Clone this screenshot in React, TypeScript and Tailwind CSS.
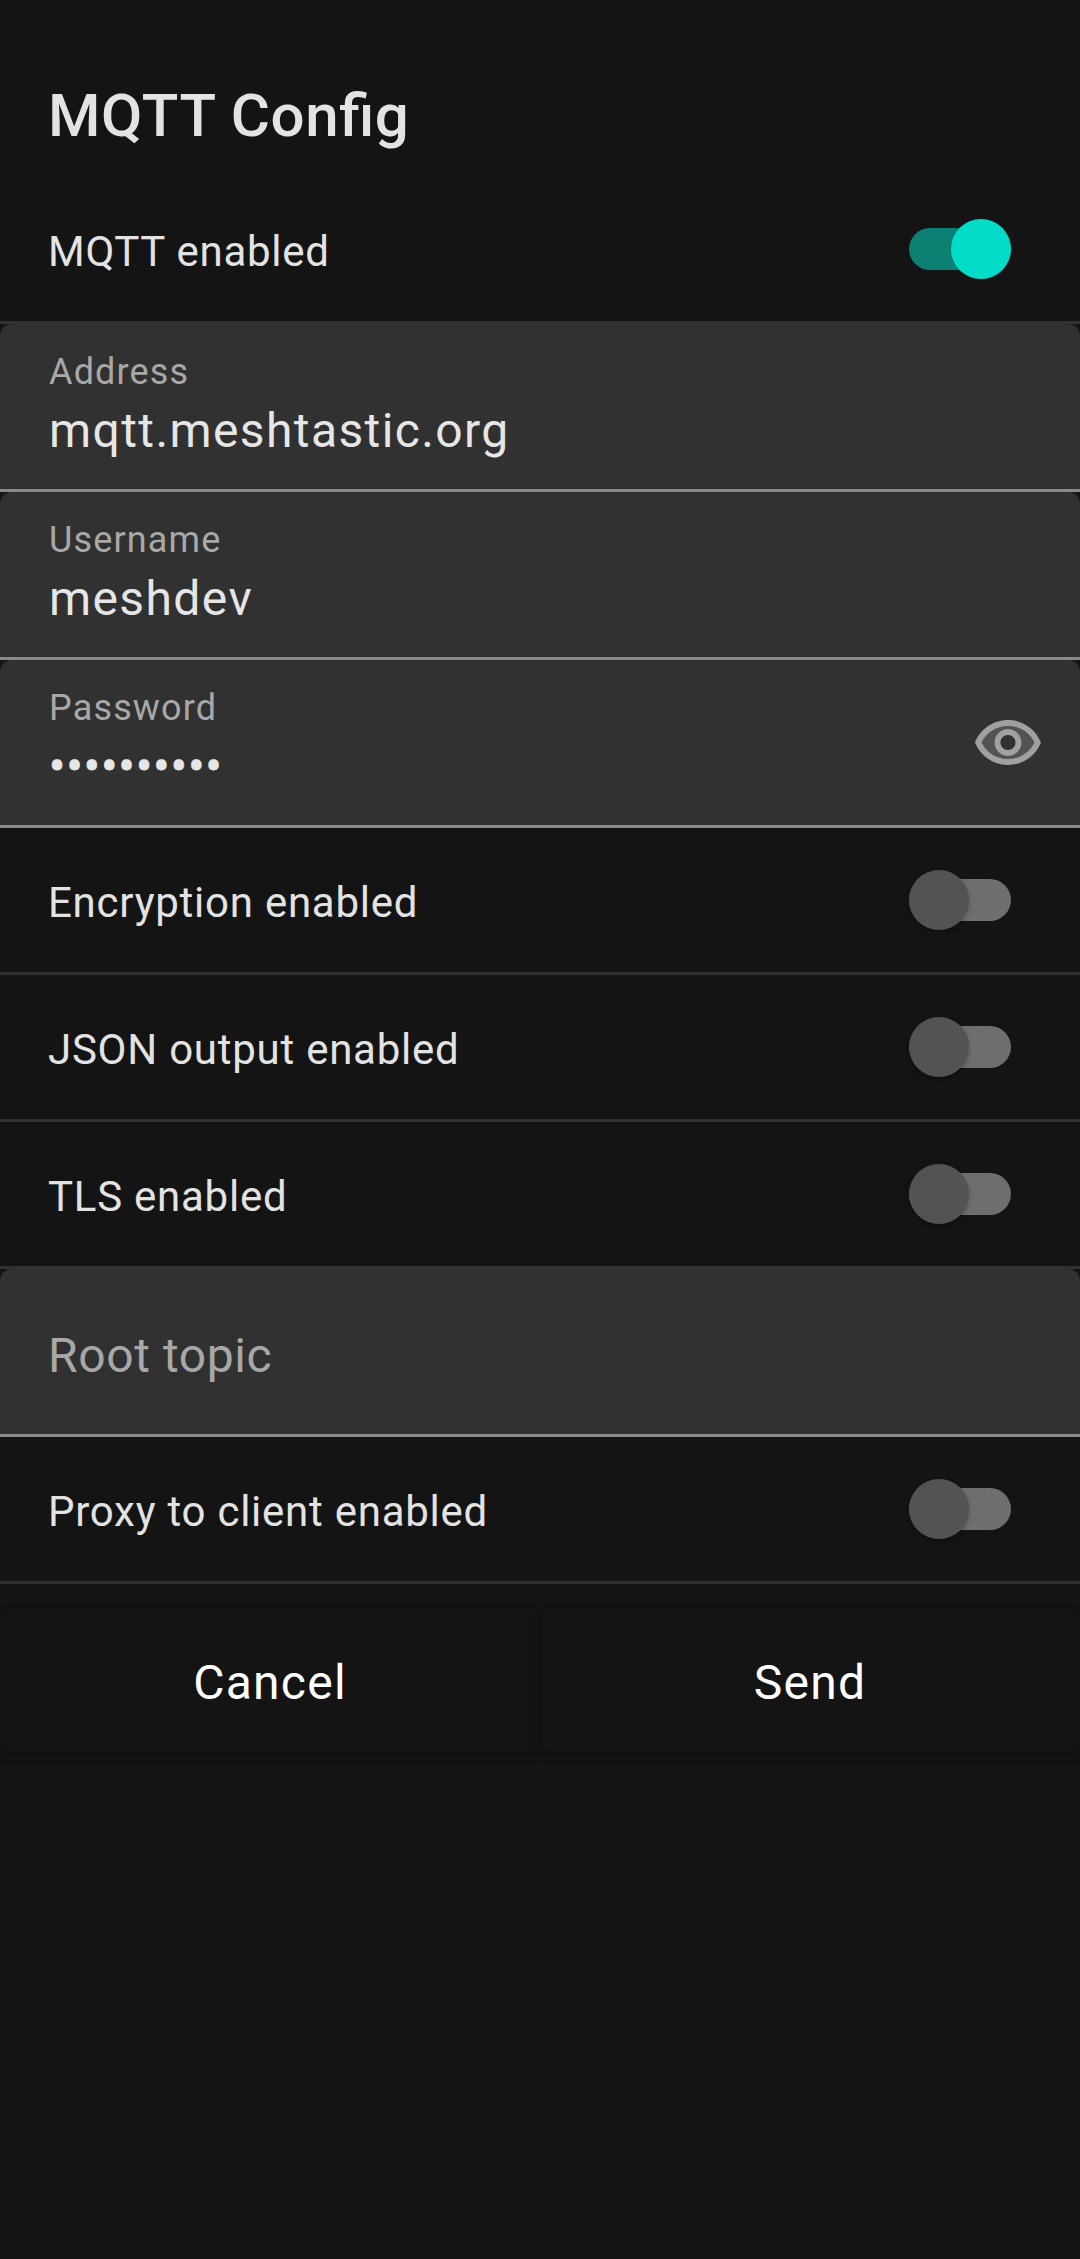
import { useState } from 'react';

function Toggle({ on, onChange }: { on: boolean; onChange: () => void }) {
  return (
    <button
      type="button"
      role="switch"
      aria-checked={on}
      onClick={onChange}
      className={`flex h-[60px] w-[102px] shrink-0 items-center ${on ? 'justify-end' : 'justify-start'} relative`}
    >
      <span
        className={`absolute inset-x-0 top-[9px] h-[42px] rounded-full ${on ? 'bg-[#0c8173]' : 'bg-[#6e6e6e]'}`}
      />
      <span
        className={`relative size-[60px] rounded-full ${
          on ? 'bg-[#03dcc8]' : 'bg-[#535353] shadow-[0_2px_4px_rgba(0,0,0,0.25)]'
        }`}
      />
    </button>
  );
}

function SwitchRow({ label, initial = false }: { label: string; initial?: boolean }) {
  const [on, setOn] = useState(initial);
  return (
    <div className="flex h-[147px] items-center justify-between border-b-[3px] border-[#313131] pr-[69px] pl-12">
      <span className="pt-[5px] text-[42px] leading-[50px] tracking-[0.75px] text-[#e3e3e3]">{label}</span>
      <Toggle on={on} onChange={() => setOn(!on)} />
    </div>
  );
}

function EyeIcon() {
  return (
    <svg viewBox="0 0 24 24" className="size-[72px] fill-[#a0a0a0]">
      <path
        className="fill-[#535353]"
        d="M12 6c-3.79 0-7.17 2.13-8.82 5.5C4.83 14.87 8.21 17 12 17s7.17-2.13 8.82-5.5C19.17 8.13 15.79 6 12 6zm0 10c-2.48 0-4.5-2.02-4.5-4.5S9.52 7 12 7s4.5 2.02 4.5 4.5S14.48 16 12 16z"
      />
      <path d="M12 4C7 4 2.73 7.11 1 11.5 2.73 15.89 7 19 12 19s9.27-3.11 11-7.5C21.27 7.11 17 4 12 4zm0 13c-3.79 0-7.17-2.13-8.82-5.5C4.83 8.13 8.21 6 12 6s7.17 2.13 8.82 5.5C19.17 14.87 15.79 17 12 17zm0-10c-2.48 0-4.5 2.02-4.5 4.5S9.52 16 12 16s4.5-2.02 4.5-4.5S14.48 7 12 7zm0 7c-1.38 0-2.5-1.12-2.5-2.5S10.62 9 12 9s2.5 1.12 2.5 2.5S13.38 14 12 14z" />
    </svg>
  );
}

function Field({ label, value, secret = false }: { label: string; value?: string; secret?: boolean }) {
  return (
    <div className="flex h-[168px] flex-col">
      <div className="flex flex-1 justify-between rounded-t-[12px] bg-[#313131] pr-9 pl-12">
        {value ? (
          <div className="flex flex-col pt-[27px] pl-px">
            <span className="text-[36px] leading-[42px] tracking-[1.15px] text-[#a8a8a8]">{label}</span>
            <span
              className={`mt-[10px] text-[48px] leading-[56px] text-[#e6e6e6] ${
                secret ? 'tracking-[1.2px] [-webkit-text-stroke:0.8px_#e6e6e6]' : 'tracking-[1.4px]'
              }`}
            >
              {value}
            </span>
          </div>
        ) : (
          <span className="pt-[59px] text-[48px] leading-[56px] tracking-[0.6px] text-[#a8a8a8]">{label}</span>
        )}
        {secret && (
          <button type="button" aria-label="Show password" className="mt-12 size-[72px]">
            <EyeIcon />
          </button>
        )}
      </div>
      <div className="h-[3px] bg-[#8a8a8a]" />
    </div>
  );
}

function ActionButton({ label }: { label: string }) {
  return (
    <button
      type="button"
      className="h-36 flex-1 rounded-[12px] bg-[#141414] pt-[5px] text-[48px] leading-[56px] tracking-[1.25px] text-white shadow-[0_4px_10px_rgba(0,0,0,0.2)]"
    >
      {label}
    </button>
  );
}

export default function App() {
  return (
    <main className="flex h-[2259px] w-[1080px] flex-col bg-[#141414] font-['Roboto',sans-serif]">
      <h1 className="h-[177px] pt-20 pl-12 text-[60px] leading-[72px] font-medium tracking-[0.6px] text-[#e3e3e3] [font-feature-settings:'liga'_1]">
        MQTT Config
      </h1>
      <SwitchRow label="MQTT enabled" initial />
      <Field label="Address" value="mqtt.meshtastic.org" />
      <Field label="Username" value="meshdev" />
      <Field label="Password" value="••••••••••" secret />
      <SwitchRow label="Encryption enabled" />
      <SwitchRow label="JSON output enabled" />
      <SwitchRow label="TLS enabled" />
      <Field label="Root topic" />
      <SwitchRow label="Proxy to client enabled" />
      <div className="mt-6 flex">
        <ActionButton label="Cancel" />
        <ActionButton label="Send" />
      </div>
    </main>
  );
}
